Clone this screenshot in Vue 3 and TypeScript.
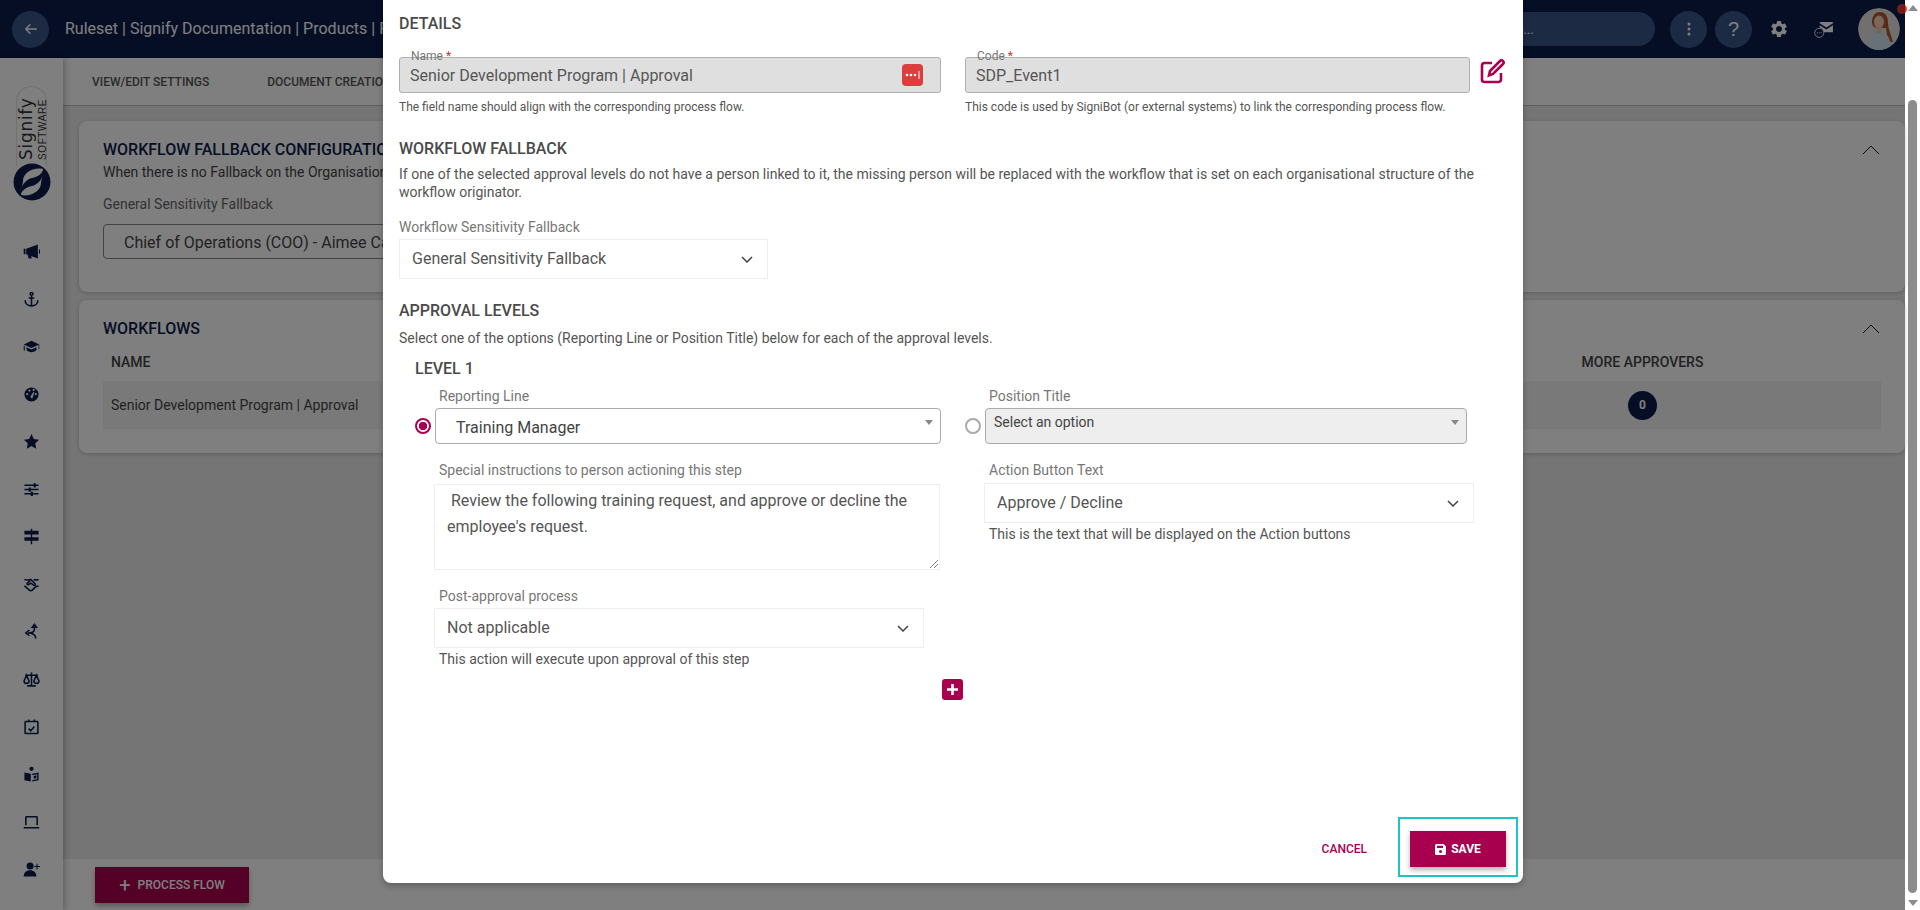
<template>
  <div class="screen">
    <div class="page">
      <header class="topbar">
        <button class="round-btn back-btn">
          <svg width="14" height="14" viewBox="0 0 24 24" fill="none" stroke="#fff" stroke-width="2.4"><path d="M22 12H3M11 4l-8 8 8 8" /></svg>
        </button>
        <div class="crumbs">Ruleset | Signify Documentation | Products | Flow</div>
        <div class="search">Search here...</div>
        <button class="round-btn">
          <svg width="4" height="14" viewBox="0 0 4 14" fill="#fff"><circle cx="2" cy="2" r="1.5" /><circle cx="2" cy="7" r="1.5" /><circle cx="2" cy="12" r="1.5" /></svg>
        </button>
        <button class="round-btn help-btn">?</button>
        <svg class="gear" width="20" height="20" viewBox="0 0 24 24" fill="#fff"><path d="M19.14 12.94c.04-.3.06-.61.06-.94 0-.32-.02-.64-.07-.94l2.03-1.58c.18-.14.23-.41.12-.61l-1.92-3.32c-.12-.22-.37-.29-.59-.22l-2.39.96c-.5-.38-1.03-.7-1.62-.94l-.36-2.54c-.04-.24-.24-.41-.48-.41h-3.84c-.24 0-.43.17-.47.41l-.36 2.54c-.59.24-1.13.57-1.62.94l-2.39-.96c-.22-.08-.47 0-.59.22L2.74 8.87c-.12.21-.08.47.12.61l2.03 1.58c-.05.3-.09.63-.09.94s.02.64.07.94l-2.03 1.58c-.18.14-.23.41-.12.61l1.92 3.32c.12.22.37.29.59.22l2.39-.96c.5.38 1.03.7 1.62.94l.36 2.54c.05.24.24.41.48.41h3.84c.24 0 .44-.17.47-.41l.36-2.54c.59-.24 1.13-.56 1.62-.94l2.39.96c.22.08.47 0 .59-.22l1.92-3.32c.12-.22.07-.47-.12-.61l-2.01-1.58zM12 15.6c-1.98 0-3.6-1.62-3.6-3.6s1.62-3.6 3.6-3.6 3.6 1.62 3.6 3.6-1.62 3.6-3.6 3.6z" /></svg>
        <svg class="mail" width="19" height="17" viewBox="0 0 20 18">
          <path d="M6 1h14v1.5L13 7 6 2.500zM6 4.500l7 4.500 7-4.500V12H10.500A6 6 0 0 0 6 7z" fill="#fff" />
          <circle cx="5.500" cy="12.500" r="4.800" fill="none" stroke="#fff" stroke-width="0.900" />
          <circle cx="3.500" cy="12.500" r="0.600" fill="#fff" /><circle cx="5.500" cy="12.500" r="0.600" fill="#fff" /><circle cx="7.500" cy="12.500" r="0.600" fill="#fff" />
        </svg>
        <div class="avatar-wrap">
          <svg class="avatar" width="42" height="42" viewBox="0 0 42 42">
            <defs><clipPath id="avatarClip"><circle cx="21" cy="21" r="21" /></clipPath></defs>
            <g clip-path="url(#avatarClip)">
              <rect width="42" height="42" fill="#e4e0dc" />
              <path d="M14 14c0-7 4-10 8-10s8 3 8 10c0 7 3 12 5 20h-5l-2-14h-9c-3 0-5-3-5-6z" fill="#b4582e" />
              <ellipse cx="21" cy="14" rx="5" ry="6.500" fill="#f4d0b8" />
              <path d="M18.500 19h5v6h-5z" fill="#f0c4a8" />
              <path d="M9 42c0-9 2-16 9-18l3 3 3-3c7 2 9 9 9 18z" fill="#d2e2f0" />
            </g>
          </svg>
          <span class="notif-dot"></span>
        </div>
      </header>

      <div class="body-row">
        <aside class="sidebar">
          <div class="logo">
            <div class="logo-pill">
              <span class="logo-soft">SOFTWARE</span>
              <span class="logo-name">Signify</span>
            </div>
            <svg class="logo-mark" width="38" height="38" viewBox="0 0 38 38">
              <circle cx="19" cy="19" r="18.500" fill="#0c1c4c" />
              <path d="M30 6C20 4 10 10 10 18c0 3-2 8-3 11 2-8 7-13 12-14 6-1 11-5 11-9z" fill="#fff" />
              <path d="M8 32c10 2 20-4 20-12 0-3 2-8 3-11-2 8-7 13-12 14-6 1-11 5-11 9z" fill="#fff" />
            </svg>
          </div>
          <nav class="side-nav">
            <svg v-for="icon in sideIcons" :key="icon.name" class="side-icon" width="17" height="17" viewBox="0 0 24 24"
              :fill="icon.stroke ? 'none' : '#0c1c4c'" :stroke="icon.stroke ? '#0c1c4c' : 'none'" stroke-width="2.2">
              <path :d="icon.d" />
            </svg>
          </nav>
        </aside>

        <main class="content">
          <div class="tabs">
            <span>VIEW/EDIT SETTINGS</span>
            <span>DOCUMENT CREATION</span>
          </div>
          <div class="cards">
            <section class="card card-fallback">
              <svg class="collapse" width="18" height="10" viewBox="0 0 18 10" fill="none" stroke="#111" stroke-width="1"><path d="M1 9l8-8 8 8" /></svg>
              <h3 class="clipped">WORKFLOW FALLBACK CONFIGURATION</h3>
              <p class="card-sub clipped">When there is no Fallback on the Organisational structure</p>
              <div class="card-label">General Sensitivity Fallback</div>
              <div class="outline-select"><div class="clipped select-text">Chief of Operations (COO) - Aimee Carter</div></div>
            </section>
            <section class="card card-flows">
              <svg class="collapse" width="18" height="10" viewBox="0 0 18 10" fill="none" stroke="#111" stroke-width="1"><path d="M1 9l8-8 8 8" /></svg>
              <h3>WORKFLOWS</h3>
              <div class="flow-head"><span>NAME</span><span class="more-col">MORE APPROVERS</span></div>
              <div class="flow-row">
                <span>Senior Development Program | Approval</span>
                <span class="more-col"><span class="count">0</span></span>
              </div>
            </section>
          </div>
          <div class="bottom-bar">
            <button class="process-btn"><span class="plus">+</span>PROCESS FLOW</button>
          </div>
        </main>
      </div>

      <div class="backdrop"></div>

      <div class="modal">
        <h4 class="first-head">DETAILS</h4>
        <div class="detail-row">
          <div class="detail-name">
            <div class="locked-field">
              <span class="notch">Name <i>*</i></span>
              <span>Senior Development Program | Approval</span>
              <svg class="pass-icon" width="21" height="22" viewBox="0 0 21 22">
                <rect width="21" height="22" rx="4" fill="#dc3d3d" />
                <circle cx="5" cy="11" r="1.300" fill="#fff" /><circle cx="9" cy="11" r="1.300" fill="#fff" /><circle cx="13" cy="11" r="1.300" fill="#fff" />
                <path d="M17 7v8" stroke="#fff" stroke-width="1" />
              </svg>
            </div>
            <div class="help">The field name should align with the corresponding process flow.</div>
          </div>
          <div class="detail-code">
            <div class="locked-field">
              <span class="notch">Code <i>*</i></span>
              <span>SDP_Event1</span>
            </div>
            <div class="help">This code is used by SigniBot (or external systems) to link the corresponding process flow.</div>
          </div>
          <svg class="edit-icon" width="25" height="25" viewBox="0 0 25 25" fill="none" stroke="#a8004f" stroke-width="2.600">
            <path d="M12 4H4.500A2.500 2.500 0 0 0 2 6.500v14A2.500 2.500 0 0 0 4.500 23h14a2.500 2.500 0 0 0 2.500-2.500V14" />
            <path d="M9 16.500l1-4.500L20 2c1-1 2.200-1 3 0s1 2 0 3L13 15z" />
          </svg>
        </div>

        <h4 class="fallback-head">WORKFLOW FALLBACK</h4>
        <p class="para fallback-para">If one of the selected approval levels do not have a person linked to it, the missing person will be replaced with the workflow that is set on each organisational structure of the workflow originator.</p>
        <div class="label fallback-label">Workflow Sensitivity Fallback</div>
        <div class="plain-select fallback-select">
          <span>General Sensitivity Fallback</span>
          <svg width="12" height="7" viewBox="0 0 12 7" fill="none" stroke="#444" stroke-width="1.500"><path d="M1 1l5 5 5-5" /></svg>
        </div>

        <h4 class="levels-head">APPROVAL LEVELS</h4>
        <p class="para levels-sub">Select one of the options (Reporting Line or Position Title) below for each of the approval levels.</p>
        <h4 class="level-title">LEVEL 1</h4>

        <div class="level-grid">
          <div class="level-col left-col">
            <div class="label inset">Reporting Line</div>
            <div class="pick-row">
              <span class="radio on"></span>
              <div class="drop-select">
                <span class="drop-value">Training Manager</span>
                <span class="caret"></span>
              </div>
            </div>
            <div class="label inset gap-label">Special instructions to person actioning this step</div>
            <div class="note-box">
              <div>&nbsp;Review the following training request, and approve or decline the employee's request.</div>
              <svg class="grip" width="9" height="9" viewBox="0 0 9 9" stroke="#666" stroke-width="0.800"><path d="M1 9l8-8M5 9l4-4" /></svg>
            </div>
            <div class="label inset gap-label">Post-approval process</div>
            <div class="plain-select post-select">
              <span>Not applicable</span>
              <svg width="12" height="7" viewBox="0 0 12 7" fill="none" stroke="#444" stroke-width="1.500"><path d="M1 1l5 5 5-5" /></svg>
            </div>
            <div class="help-dark inset">This action will execute upon approval of this step</div>
            <button class="add-level">
              <svg width="11" height="11" viewBox="0 0 11 11" stroke="#fff" stroke-width="2.600"><path d="M5.500 0v11M0 5.500h11" /></svg>
            </button>
          </div>

          <div class="level-col right-col">
            <div class="label inset">Position Title</div>
            <div class="pick-row pick-right">
              <span class="radio"></span>
              <div class="drop-select disabled">
                <span class="drop-value">Select an option</span>
                <span class="caret"></span>
              </div>
            </div>
            <div class="label inset gap-label">Action Button Text</div>
            <div class="plain-select action-select">
              <span>Approve / Decline</span>
              <svg width="12" height="7" viewBox="0 0 12 7" fill="none" stroke="#444" stroke-width="1.500"><path d="M1 1l5 5 5-5" /></svg>
            </div>
            <div class="help-dark inset">This is the text that will be displayed on the Action buttons</div>
          </div>
        </div>

        <div class="modal-foot">
          <button class="cancel-btn">CANCEL</button>
          <div class="save-frame">
            <button class="save-btn">
              <svg width="11" height="11" viewBox="0 0 11 11"><path fill="#fff" fill-rule="evenodd" d="M1.500 0H8.500L11 2.500V9.500A1.500 1.500 0 0 1 9.500 11H1.500A1.500 1.500 0 0 1 0 9.500V1.500A1.500 1.500 0 0 1 1.500 0zM2 1.800V4H8V1.800zM5.500 6a1.500 1.500 0 1 0 0 3 1.500 1.500 0 0 0 0-3z" /></svg>
              SAVE
            </button>
          </div>
        </div>
      </div>
    </div>

    <div class="scrollbar">
      <span class="arrow-up"></span>
      <span class="thumb"></span>
      <span class="arrow-down"></span>
    </div>
  </div>
</template>

<script setup lang="ts">
interface SideIcon {
  name: string
  d: string
  stroke?: boolean
}

const sideIcons: SideIcon[] = [
  { name: 'announce', d: 'M1 8h2.500v8H1zM4.500 8L21 2v20L4.500 16zM6.500 17l5 1.500.8 3.500H8zM22.500 9a3 3 0 0 1 0 6z' },
  { name: 'anchor', stroke: true, d: 'M12 6a2 2 0 1 0 0-4 2 2 0 0 0 0 4zM12 6v15M8 10h8M3 13c0 5 4 8 9 8s9-3 9-8' },
  { name: 'training', d: 'M12 4L1 9l11 5 10-4.500V16h1V9zM5 13v4c2 2 4 3 7 3s5-1 7-3v-4l-7 3.200zM1 11h1.500v7H1z' },
  { name: 'gauge', d: 'M12 2a10 10 0 1 0 0 20 10 10 0 0 0 0-20zM6 13a1.500 1.500 0 1 1 0-3 1.500 1.500 0 0 1 0 3zM9 8a1.500 1.500 0 1 1 0-3 1.500 1.500 0 0 1 0 3zM15 7a1.500 1.500 0 1 1 0-3 1.500 1.500 0 0 1 0 3zM13.500 17a2 2 0 0 1-2.800-2.500L15 8l1 .5zM18 13a1.500 1.500 0 1 1 0-3 1.500 1.500 0 0 1 0 3z' },
  { name: 'star', d: 'M12 1.500l3.300 6.900 7.400 1-5.400 5.200 1.300 7.500L12 18.500l-6.600 3.600 1.300-7.500L1.300 9.400l7.400-1z' },
  { name: 'sliders', d: 'M2 5h20v2H2zM2 11h20v2H2zM2 17h20v2H2zM15 3h3v6h-3zM8 9h3v6H8zM11 15h3v6h-3z' },
  { name: 'signs', d: 'M11 1h2v3h9v5H13v4h9v5H13v5h-2v-5H2v-5h9V9H2V4h9z' },
  { name: 'handshake', stroke: true, d: 'M2 5c4 1 7 1 9 0l6 6c1 1 0 3-2 2l-4-3-3 2c-2 1-3-1-2-2l4-3M22 5c-3 1-5 1-7 0M2 14l7 6c1 1 3 1 4 0l5-5 4-1' },
  { name: 'split', stroke: true, d: 'M16 2l-3 4h6zM16 6v3c0 4-4 5-9 5M9 10l-5 4 5 4M10 14c5 1 8 3 8 8' },
  { name: 'scales', stroke: true, d: 'M12 2v18M6 21h12M3 6h18M5 6L1.500 14a3.500 3.500 0 0 0 7 0zM19 6l-3.500 8a3.500 3.500 0 0 0 7 0z' },
  { name: 'calendar', stroke: true, d: 'M4 5h16c.6 0 1 .4 1 1v15c0 .6-.4 1-1 1H4c-.6 0-1-.4-1-1V6c0-.6.4-1 1-1zM8 2v3M16 2v3M8 15l3 3 5-6' },
  { name: 'reader', d: 'M12 1a3 3 0 1 1 0 6 3 3 0 0 1 0-6zM2 9l9 2v11l-9-2zM22 9v11l-9 2V20l7-1.600v-6.800l-7 1.500V11zM15 14l4-1v4l-4 1z' },
  { name: 'laptop', stroke: true, d: 'M4 16V5c0-.6.4-1 1-1h14c.6 0 1 .4 1 1v11M1 19.500h22' },
  { name: 'user-add', d: 'M10 2a5 5 0 1 1 0 10 5 5 0 0 1 0-10zM1 22c0-6 4-9 9-9s9 3 9 9zM19 4h1.500v3H24v1.500h-3.500V12H19V8.500h-3V7h3z' }
]
</script>

<style>
html,
body {
  margin: 0;
  overflow: hidden;
}
</style>

<style scoped>
.screen {
  display: flex;
  width: 1920px;
  height: 910px;
  overflow: hidden;
  font-family: Roboto, "Liberation Sans", sans-serif;
  color: #444;
}

.page {
  position: relative;
  flex: 1;
  display: flex;
  flex-direction: column;
  min-width: 0;
}

/* Top bar */
.topbar {
  display: flex;
  align-items: center;
  height: 58px;
  padding-left: 12px;
  background: #0c1c4c;
  color: #fff;
}

.round-btn {
  display: flex;
  align-items: center;
  justify-content: center;
  width: 37px;
  height: 37px;
  padding: 0;
  border: none;
  border-radius: 50%;
  background: #385589;
  color: #fff;
}

.crumbs {
  margin-left: 16px;
  margin-bottom: 2px;
  width: 318px;
  overflow: hidden;
  font-size: 16px;
  white-space: nowrap;
}

.search {
  margin-left: auto;
  width: 220px;
  height: 34px;
  margin-right: 15px;
  padding-left: 20px;
  box-sizing: border-box;
  border-radius: 17px;
  background: #385589;
  font-size: 13px;
  line-height: 36px;
}

.help-btn {
  margin-left: 8px;
  font-size: 20px;
}

.gear {
  margin-left: 17px;
}

.mail {
  margin-left: 25px;
}

.avatar-wrap {
  position: relative;
  width: 42px;
  height: 42px;
  margin-left: 25px;
  margin-right: 5px;
}

.avatar {
  display: block;
  border-radius: 50%;
}

.notif-dot {
  position: absolute;
  right: -7px;
  top: -4px;
  width: 10px;
  height: 10px;
  border-radius: 50%;
  background: #e53935;
}

/* Sidebar */
.body-row {
  flex: 1;
  display: flex;
  min-height: 0;
}

.sidebar {
  display: flex;
  flex-direction: column;
  align-items: center;
  width: 63px;
  flex-shrink: 0;
  background: #fff;
  box-shadow: 2px 0 6px rgba(0, 0, 0, 0.25);
  z-index: 1;
}

.logo {
  display: flex;
  flex-direction: column;
  align-items: center;
  margin-top: 28px;
}

.logo-pill {
  display: flex;
  flex-direction: row-reverse;
  justify-content: center;
  gap: 3px;
  width: 31px;
  height: 80px;
  padding: 8px 0 6px;
  box-sizing: border-box;
  border: 1px solid #e2e2e2;
  border-bottom: none;
  border-radius: 16px 16px 0 0;
}

.logo-name,
.logo-soft {
  writing-mode: vertical-rl;
  transform: rotate(180deg);
  text-align: left;
  color: #333;
  white-space: nowrap;
}

.logo-name {
  font-family: "DejaVu Sans", sans-serif;
  font-size: 17px;
  line-height: 18px;
  letter-spacing: 0.700px;
}

.logo-soft {
  font-family: "Liberation Sans", sans-serif;
  font-size: 10px;
  line-height: 9px;
  letter-spacing: 0.600px;
}

.logo-mark {
  margin-top: -3px;
}

.side-nav {
  display: flex;
  flex-direction: column;
  align-items: center;
  gap: 30.550px;
  margin-top: 42px;
}

.side-icon {
  display: block;
}

/* Underlying page */
.content {
  flex: 1;
  display: flex;
  flex-direction: column;
  min-width: 0;
  background: #ebebeb;
}

.tabs {
  display: flex;
  gap: 58px;
  align-items: center;
  height: 47px;
  padding-left: 29px;
  background: #fff;
  border-bottom: 1px solid #bbb;
  font-size: 12px;
  font-weight: 500;
  color: #555;
}

.cards {
  flex: 1;
  padding: 15px 0 0 16px;
}

.card {
  position: relative;
  box-sizing: border-box;
  padding-left: 24px;
  padding-right: 24px;
  background: #fff;
  border-radius: 8px;
  box-shadow: 0 1px 4px rgba(0, 0, 0, 0.2);
}

.card h3 {
  margin: 0;
  font-size: 16px;
  font-weight: 500;
  line-height: 20px;
  color: #0c1c4c;
}

.clipped {
  max-width: 280px;
  overflow: hidden;
  white-space: nowrap;
}

.card-fallback {
  height: 171px;
  padding-top: 19px;
}

.card-flows {
  height: 153px;
  margin-top: 8px;
  padding-top: 19px;
}

.collapse {
  position: absolute;
  right: 25px;
  top: 24px;
}

.card-sub {
  margin: 3px 0 0;
  font-size: 14px;
  line-height: 18px;
}

.card-label {
  margin-top: 14px;
  font-size: 14px;
  line-height: 18px;
  color: #666;
}

.outline-select {
  width: 600px;
  margin-top: 11px;
  height: 35px;
  padding-left: 20px;
  box-sizing: border-box;
  border: 1px solid #888;
  border-radius: 4px;
  font-size: 16px;
  line-height: 35px;
}

.select-text {
  max-width: 259px;
}

.flow-head {
  display: flex;
  align-items: center;
  height: 42px;
  padding-left: 8px;
  padding-top: 4px;
  box-sizing: border-box;
  font-size: 14px;
  font-weight: 500;
}

.flow-row {
  display: flex;
  align-items: center;
  height: 48px;
  padding-left: 8px;
  background: #f2f2f2;
  font-size: 14px;
}

.more-col {
  margin-left: auto;
  width: 125px;
  margin-right: 176px;
  text-align: center;
  white-space: nowrap;
}

.count {
  display: inline-block;
  width: 29px;
  height: 29px;
  border-radius: 50%;
  background: #0c1c4c;
  color: #fff;
  font-size: 12px;
  font-weight: 700;
  line-height: 29px;
}

.bottom-bar {
  flex-shrink: 0;
  height: 51px;
  padding: 8px 0 0 32px;
  box-sizing: border-box;
  background: #fff;
}

.process-btn {
  display: flex;
  align-items: center;
  justify-content: center;
  width: 154px;
  height: 36px;
  border: none;
  background: #a8004f;
  color: #fff;
  font-family: inherit;
  font-size: 12px;
  font-weight: 500;
  box-shadow: 0 3px 5px rgba(0, 0, 0, 0.3);
}

.plus {
  margin-right: 7px;
  font-size: 20px;
  font-weight: 400;
}

.backdrop {
  position: absolute;
  inset: 0;
  background: rgba(0, 0, 0, 0.5);
  z-index: 2;
}

/* Modal */
.modal {
  position: absolute;
  left: 383px;
  top: 0;
  z-index: 3;
  display: flex;
  flex-direction: column;
  width: 1140px;
  height: 883px;
  padding: 14px 15px 0 16px;
  box-sizing: border-box;
  background: #fff;
  border-radius: 0 0 8px 8px;
  box-shadow: 0 3px 6px rgba(0, 0, 0, 0.25);
}

.modal h4 {
  margin: 0;
  font-size: 16px;
  font-weight: 500;
  line-height: 20px;
  color: #4a4a4a;
}

.detail-row {
  display: flex;
  align-items: flex-start;
  margin-top: 23px;
}

.detail-name {
  width: 542px;
}

.detail-code {
  width: 505px;
  margin-left: 24px;
}

.locked-field {
  position: relative;
  display: flex;
  align-items: center;
  height: 36px;
  padding: 0 10px;
  box-sizing: border-box;
  background: #dfdfdf;
  border: 1px solid #b0b0b0;
  border-radius: 3px;
  font-size: 16px;
  color: #555;
}

.notch {
  position: absolute;
  left: 7px;
  top: -9px;
  padding: 0 4px;
  background: linear-gradient(#fff 60%, transparent 60%);
  font-size: 12px;
  line-height: 14px;
  color: #777;
}

.notch i {
  color: #c0392b;
  font-style: normal;
}

.pass-icon {
  position: absolute;
  right: 17px;
  top: 6px;
}

.help {
  margin-top: 6px;
  font-size: 12px;
  line-height: 16px;
  color: #555;
}

.edit-icon {
  margin-left: 10px;
  margin-top: 2px;
}

.fallback-head {
  margin-top: 24px !important;
}

.para {
  margin: 6px 0 0;
  font-size: 14px;
  line-height: 18px;
  color: #555;
}

.label {
  font-size: 14px;
  line-height: 18px;
  color: #777;
}

.fallback-label {
  margin-top: 17px;
}

.plain-select {
  display: flex;
  align-items: center;
  justify-content: space-between;
  height: 40px;
  padding: 0 14px 2px 12px;
  box-sizing: border-box;
  background: #fff;
  border: 1px solid #eee;
  font-size: 16px;
  color: #555;
}

.plain-select svg {
  margin-top: 2px;
}

.fallback-select {
  width: 369px;
  margin-top: 3px;
}

.levels-head {
  margin-top: 22px !important;
}

.levels-sub {
  margin-top: 8px;
}

.level-title {
  margin-top: 12px !important;
  padding-left: 16px;
}

.level-grid {
  display: flex;
  margin-top: 8px;
  padding-left: 16px;
}

.left-col {
  width: 526px;
}

.right-col {
  width: 509px;
  margin-left: 24px;
}

.inset {
  padding-left: 24px;
}

.pick-row {
  display: flex;
  align-items: center;
  margin-top: 3px;
  gap: 4px;
}

.pick-right {
  width: 502px;
}

.radio {
  flex-shrink: 0;
  width: 16px;
  height: 16px;
  box-sizing: border-box;
  border: 2px solid #aaa;
  border-radius: 50%;
}

.radio.on {
  border-color: #a8004f;
  background: radial-gradient(circle, #a8004f 0 4px, #fff 4.500px);
}

.drop-select {
  position: relative;
  flex: 1;
  height: 36px;
  padding-left: 20px;
  box-sizing: border-box;
  border: 1px solid #aaa;
  border-radius: 4px;
  font-size: 16px;
  line-height: 38px;
  color: #444;
}

.drop-select.disabled {
  padding-left: 8px;
  background: #eee;
  font-size: 14px;
  line-height: 26px;
}

.caret {
  position: absolute;
  right: 7px;
  top: 11px;
  width: 0;
  height: 0;
  border-left: 4px solid transparent;
  border-right: 4px solid transparent;
  border-top: 5px solid #888;
}

.gap-label {
  margin-top: 17px;
}

.note-box {
  position: relative;
  width: 506px;
  height: 86px;
  margin: 5px 0 0 19px;
  padding: 3px 12px;
  box-sizing: border-box;
  border: 1px solid #eee;
  font-size: 16px;
  line-height: 26px;
  color: #555;
}

.grip {
  position: absolute;
  right: 1px;
  bottom: 1px;
}

.post-select {
  width: 490px;
  margin: 3px 0 0 19px;
}

.help-dark {
  margin-top: 3px;
  font-size: 14px;
  line-height: 16px;
  color: #555;
}

.add-level {
  display: flex;
  align-items: center;
  justify-content: center;
  width: 21px;
  height: 21px;
  margin: 12px 0 0 527px;
  padding: 0;
  border: none;
  border-radius: 3px;
  background: #a8004f;
}

.action-select {
  width: 490px;
  margin: 4px 0 0 19px;
}

.modal-foot {
  position: absolute;
  right: 5px;
  bottom: 6px;
  display: flex;
  align-items: center;
}

.cancel-btn {
  margin-right: 31px;
  margin-top: 4px;
  padding: 0;
  border: none;
  background: none;
  font-family: inherit;
  font-size: 12px;
  font-weight: 500;
  color: #a8004f;
}

.save-frame {
  padding: 12px 10px 8px;
  border: 2px solid #1cc4c4;
}

.save-btn {
  display: flex;
  align-items: center;
  justify-content: center;
  gap: 5px;
  width: 96px;
  height: 36px;
  padding: 0;
  border: none;
  background: #a8004f;
  color: #fff;
  font-family: inherit;
  font-size: 12px;
  font-weight: 700;
  box-shadow: 0 3px 5px rgba(0, 0, 0, 0.3);
}

/* Scrollbar */
.scrollbar {
  display: flex;
  flex-direction: column;
  align-items: center;
  flex-shrink: 0;
  width: 15px;
  background: #fff;
}

.arrow-up,
.arrow-down {
  width: 0;
  height: 0;
  border-left: 5px solid transparent;
  border-right: 5px solid transparent;
}

.arrow-up {
  margin-top: 5px;
  border-bottom: 6px solid #8c8c8c;
}

.arrow-down {
  margin-top: 7px;
  border-top: 6px solid #8c8c8c;
}

.thumb {
  width: 9px;
  height: 793px;
  margin-top: 89px;
  background: #8c8c8c;
  border-radius: 5px;
}
</style>
